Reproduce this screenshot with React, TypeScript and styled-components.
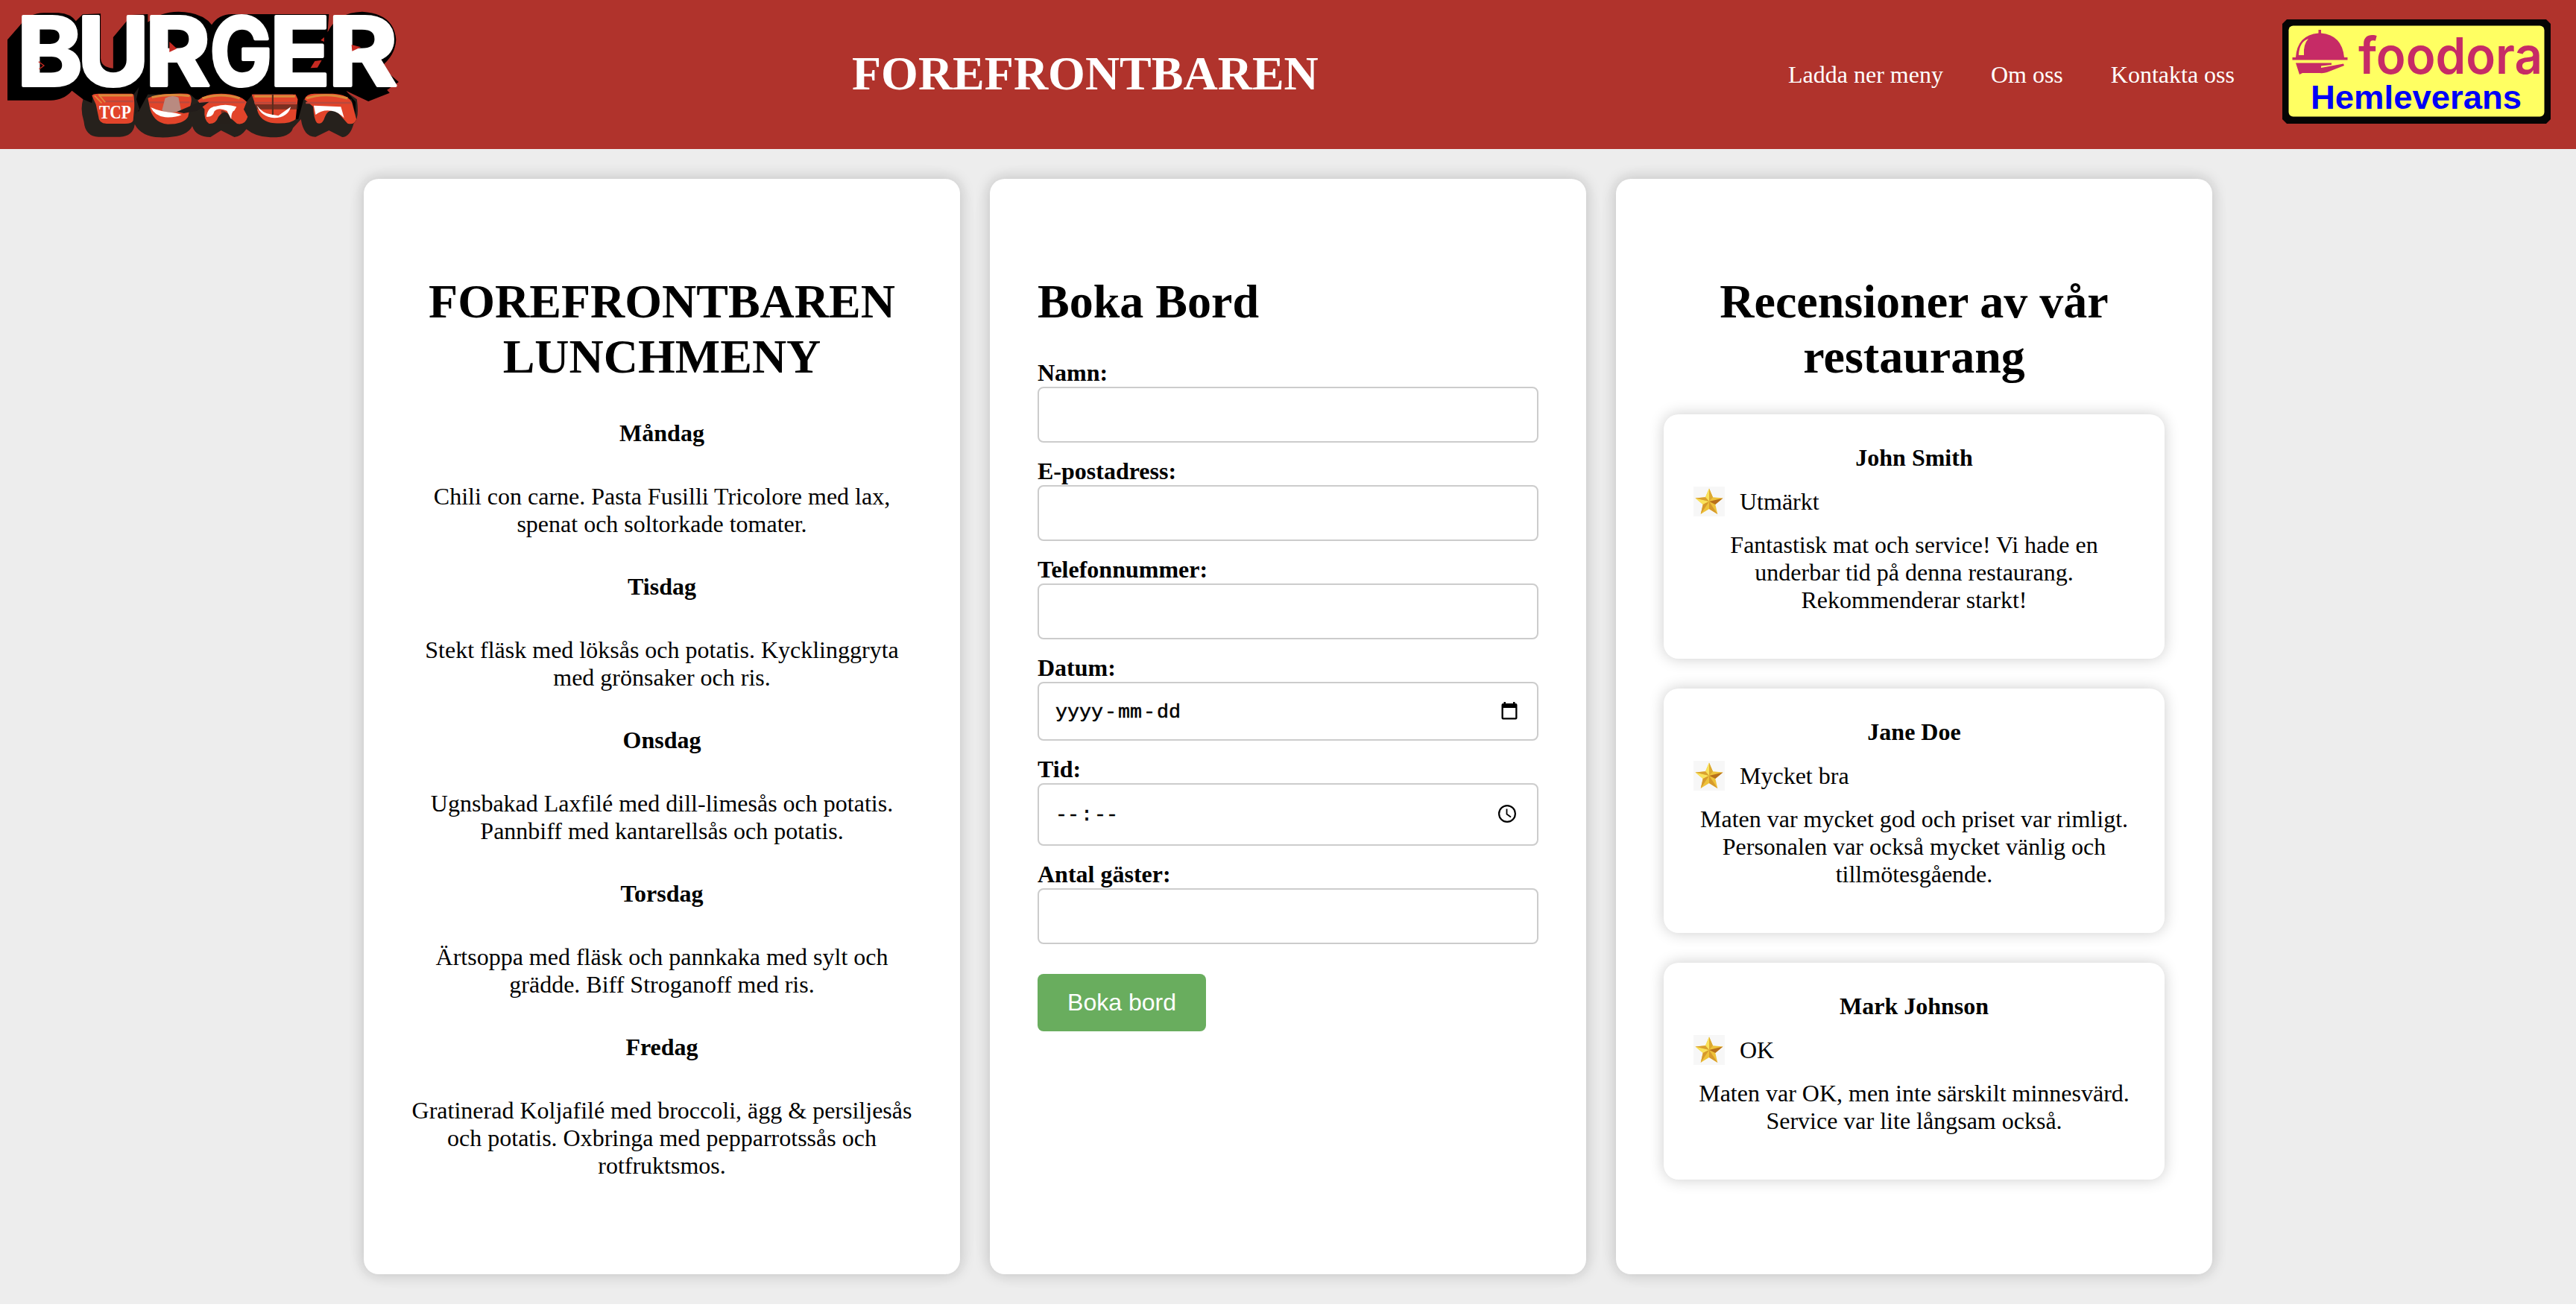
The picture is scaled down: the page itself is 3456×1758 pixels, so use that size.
import React from "react";
import styled, { createGlobalStyle } from "styled-components";

const GlobalStyle = createGlobalStyle`
  *, *::before, *::after { box-sizing: border-box; }
  html, body { margin: 0; background: #fdfdfd; }
  body {
    font-family: "Liberation Serif", "Times New Roman", serif;
    font-size: 32px;
    line-height: 37px;
    color: #000;
  }
  h1, h2, h3, p { margin: 0; }
`;

const Page = styled.div`
  height: 1750px;
  background: #ededed;
`;

const Header = styled.header`
  display: flex;
  align-items: center;
  height: 200px;
  padding-right: 34px;
  background: #b0332c;
  color: #fff;
`;

const Brand = styled.h1`
  margin-left: 582px;
  padding-bottom: 2px;
  font-size: 64px;
  line-height: 74px;
  font-weight: 700;
`;

const Nav = styled.nav`
  display: flex;
  gap: 64px;
  margin-left: auto;
  margin-right: 64px;
`;

const NavLink = styled.a`
  color: #fff;
  text-decoration: none;
  white-space: nowrap;
`;

const Columns = styled.main`
  display: flex;
  justify-content: center;
  gap: 40px;
  padding: 40px 0;
`;

const Column = styled.section<{ $align?: string }>`
  width: 800px;
  height: 1470px;
  padding: 128px 64px 64px;
  border-radius: 20px;
  background: #fff;
  box-shadow: 0 0 20px rgba(0, 0, 0, 0.2), 0 0 60px rgba(0, 0, 0, 0.015);
  text-align: ${(p) => p.$align ?? "center"};
`;

const Heading = styled.h1`
  font-size: 64px;
  line-height: 74px;
  font-weight: 700;
`;

const Day = styled.h3`
  margin-top: 47px;
  font-size: 32px;
  font-weight: 700;
`;

const Dish = styled.p`
  margin-top: 48px;
`;

const Form = styled.div`
  display: flex;
  flex-direction: column;
  align-items: flex-start;
  gap: 20px;
  margin-top: 40px;
`;

const Field = styled.div`
  width: 100%;
`;

const Label = styled.label`
  display: block;
  font-weight: 700;
`;

const Box = styled.div<{ $h: number }>`
  display: flex;
  align-items: center;
  justify-content: space-between;
  height: ${(p) => p.$h}px;
  padding: 0 22px 2px 20px;
  border: 2px solid #ccc;
  border-radius: 8px;
  background: #fff;
  font-family: "Liberation Mono", "Courier New", monospace;
  font-size: 26.667px;
`;

const Segments = styled.span`
  display: flex;
  gap: 2px;
  padding: 5px 0 0 2px;
  -webkit-text-stroke: 0.5px #000;
`;

const Submit = styled.button`
  width: 226px;
  height: 77px;
  margin-top: 20px;
  padding: 0;
  border: 0;
  border-radius: 8px;
  background: #69ad5e;
  color: #fff;
  font-family: "Liberation Sans", Arial, sans-serif;
  font-size: 32px;
  line-height: 37px;
`;

const Reviews = styled.div`
  display: flex;
  flex-direction: column;
  gap: 40px;
  margin-top: 40px;
`;

const ReviewCard = styled.article`
  padding: 40px 40px 60px;
  border-radius: 20px;
  background: #fff;
  box-shadow: 0 0 20px rgba(0, 0, 0, 0.2);
`;

const Reviewer = styled.h3`
  font-size: 32px;
  font-weight: 700;
`;

const Rating = styled.div`
  display: flex;
  align-items: center;
  gap: 20px;
  height: 40px;
  margin: 20px 0;
`;

const RatingText = styled.span`
  padding-top: 1px;
`;

const logoLetters = [
  { char: "B", x: 63, width: 248 },
  { char: "U", x: 290, width: 271 },
  { char: "R", x: 544, width: 246 },
  { char: "G", x: 787, width: 235 },
  { char: "E", x: 1012, width: 229 },
  { char: "R", x: 1231, width: 262 },
];

const BurgerLogo = () => (
  <svg width="561" height="200" viewBox="0 0 1570 600" preserveAspectRatio="none">
    <path
      fill="#26211c"
      d="M312 400Q300 440 315 490Q320 550 370 551H450Q500 548 506 500Q530 550 600 553Q700 556 722 508Q735 552 790 552L830 525L880 552Q905 550 925 520Q960 552 1015 553Q1090 555 1100 515L1130 480Q1140 552 1185 551L1235 525L1285 552Q1315 550 1328 497Q1350 480 1340 400L1300 370H320Z"
    />
    <path
      fill="#000"
      d="M28 160L78 98Q110 52 165 52H220Q265 55 285 85L310 58L378 55V235Q380 272 425 275V150L495 60L555 57V90Q600 48 670 47Q760 50 795 100Q820 58 870 57H1235L1230 130Q1265 50 1360 47Q1480 55 1487 160Q1484 225 1430 268L1497 330L1453 362L1463 374L1383 408L1300 366L1335 410V460L1320 400H1140L1120 480H1100V378H950L925 410L735 400L715 380H555L520 450L500 378H350L345 415L312 400L270 365Q240 403 190 404H28Z"
    />
    <g fill="#e2442a">
      <path d="M345 385Q350 376 375 377H495Q510 380 506 410L500 485Q495 498 470 498H400Q370 495 370 470L360 420Z" />
      <path d="M555 395Q600 374 700 377Q722 378 718 410L706 470Q690 500 630 500Q570 495 560 420Z" />
      <path d="M742 405Q770 377 830 377Q900 378 926 410L915 440L930 470Q920 505 890 498L865 475Q850 430 820 470Q810 500 785 498Q765 485 768 440Z" />
      <path d="M945 380H1110L1118 400L1110 480Q1090 500 1030 496Q975 490 965 440Z" />
      <path d="M1143 400Q1150 377 1180 377H1250Q1310 380 1322 415L1338 480Q1330 505 1305 497L1270 455Q1235 430 1220 470Q1210 505 1190 495Q1178 480 1176 430Z" />
    </g>
    <g fill="none" stroke="#d98a3a" strokeWidth="9">
      <path d="M372 384H498M570 392Q630 376 712 386M760 396Q830 372 900 396M955 388H1108M1150 396Q1220 370 1305 396" />
    </g>
    <g fill="none" stroke="#b9483c" strokeWidth="7">
      <path d="M392 408H500M560 412H712M752 412H920M955 414H1112M1148 414H1318" />
    </g>
    <path fill="#26211c" d="M830 445Q850 440 858 478L870 500L815 500Q835 470 830 445ZM1100 420H1120V440H960V420Z" opacity=".55" />
    <path fill="#b98a80" d="M620 395Q645 380 670 392L680 445Q640 462 608 445Z" />
    <g fill="#fff">
      <path d="M566 432Q600 450 660 455L682 462Q660 474 620 472Q580 466 566 432Z" />
      <path d="M775 470Q780 430 810 428Q850 415 888 430L880 445Q868 450 868 480L852 446Q820 430 805 448Q798 474 775 470Z" />
      <path d="M965 425Q985 455 1015 460L1045 466L1092 430Q1080 474 1030 475Q980 470 965 425Z" />
      <path d="M1178 425L1280 430L1292 475Q1270 450 1245 446Q1210 440 1185 462Z" />
    </g>
    <path fill="#221c1a" d="M664 450L740 415L785 410L740 446L690 456ZM502 380L522 350L512 400L524 440L508 460Z" />
    <path stroke="#5c2c1c" strokeWidth="6" d="M1024 380V462" />
    <path fill="none" stroke="#e08a3c" strokeWidth="5" d="M355 385L382 415M370 380L395 412" />
    <text x="372" y="478" fill="#fff" fontFamily="Liberation Serif, serif" fontWeight="700" fontSize="76" textLength="120" lengthAdjust="spacingAndGlyphs">
      TCP
    </text>
    <g fill="#fff" stroke="#fff" strokeWidth="12" strokeLinejoin="round" fontFamily="Inter, sans-serif" fontWeight="700" fontSize="382">
      {logoLetters.map((l) => (
        <text key={l.x} x={l.x} y="344" textLength={l.width} lengthAdjust="spacingAndGlyphs">
          {l.char}
        </text>
      ))}
    </g>
    <path fill="#c62a22" d="M636 168L664 196L636 210ZM1320 180L1355 190L1322 206ZM1166 274L1182 246L1208 242L1192 272ZM1204 162L1217 150V168Z" />
    <path fill="none" stroke="#c62a22" strokeWidth="4" d="M145 248L165 264L147 278" />
  </svg>
);

const BadgeLink = styled.a`
  display: flex;
  padding-bottom: 8px;
`;

const FoodoraBadge = () => (
  <BadgeLink>
    <svg width="360" height="140" viewBox="0 0 360 140">
      <path fill="#050505" d="M6 0H354L360 6V134L354 140H6L0 134V6Z" />
      <rect x="8.5" y="8.5" width="343" height="122" rx="6" fill="#ffff62" />
      <g fill="#c62b66">
        <path d="M48.500 14H52V18.500Q80 21 83 51H87.500V54.500H13.500V51H18Q20 21 48.500 18.500Z" />
        <path d="M18 58.500H66V61L52 62.500V65L82 59.500L83 62L60 71Q56 72.500 50 72H27L23 74Z" />
      </g>
      <path fill="#ffff62" d="M22 47Q23 30 35 26Q28 33 29 48H22Z" />
      <text x="102" y="73" fill="#c62b66" fontFamily="Inter, sans-serif" fontWeight="600" fontSize="68" textLength="247" lengthAdjust="spacingAndGlyphs">
        foodora
      </text>
      <text x="38" y="120" fill="#0000f5" fontFamily="Liberation Sans, Arial, sans-serif" fontWeight="700" fontSize="44" textLength="283" lengthAdjust="spacingAndGlyphs">
        Hemleverans
      </text>
    </svg>
  </BadgeLink>
);

const Star = () => (
  <svg width="42" height="40" viewBox="0 0 42 40">
    <rect width="42" height="40" fill="#f7f7f7" />
    <path fill="#eec23a" d="M21 2.500L26 14.300L39.500 15.500L29.300 24L32.300 37L21 30L9.700 37L12.700 24L2.500 15.500L16 14.300Z" />
    <path fill="#f9e25c" d="M21 2.500L16 14.300L21 20ZM2.500 15.500L12.700 24L21 20Z" />
    <path fill="#d9a030" d="M2.500 15.500L16 14.300L21 20Z" />
    <path fill="#b8701c" d="M39.500 15.500L21 20L29.300 24Z" />
    <path fill="#d79a2c" d="M32.300 37L21 20V30ZM9.700 37L21 20L12.700 24Z" />
    <path fill="#dca932" d="M21 2.500V20L26 14.300Z" />
  </svg>
);

const CalendarIcon = () => (
  <svg width="22" height="24" viewBox="0 0 22 24">
    <path fill="#000" fillRule="evenodd" d="M3.500 0H6V2H16V0H18.500V2H19.500Q21.500 2 21.500 4V21.500Q21.500 23.500 19.500 23.500H2.500Q.5 23.500 .5 21.500V4Q.5 2 2.500 2H3.500ZM2.800 8V21.300H19.200V8Z" />
  </svg>
);

const ClockIcon = () => (
  <svg width="26" height="26" viewBox="0 0 26 26" fill="none" stroke="#000" strokeWidth="2.200">
    <circle cx="13" cy="13" r="10.900" />
    <path strokeWidth="1.800" d="M12.500 6.500V13.600L18 17.500" />
  </svg>
);

const IconSlot = styled.span<{ $right: number }>`
  display: flex;
  margin-right: ${(p) => p.$right}px;
`;

const menu = [
  { day: "Måndag", dish: "Chili con carne. Pasta Fusilli Tricolore med lax, spenat och soltorkade tomater." },
  { day: "Tisdag", dish: "Stekt fläsk med löksås och potatis. Kycklinggryta med grönsaker och ris." },
  { day: "Onsdag", dish: "Ugnsbakad Laxfilé med dill-limesås och potatis. Pannbiff med kantarellsås och potatis." },
  { day: "Torsdag", dish: "Ärtsoppa med fläsk och pannkaka med sylt och grädde. Biff Stroganoff med ris." },
  { day: "Fredag", dish: "Gratinerad Koljafilé med broccoli, ägg & persiljesås och potatis. Oxbringa med pepparrotssås och rotfruktsmos." },
];

const reviews = [
  { name: "John Smith", rating: "Utmärkt", text: "Fantastisk mat och service! Vi hade en underbar tid på denna restaurang. Rekommenderar starkt!" },
  { name: "Jane Doe", rating: "Mycket bra", text: "Maten var mycket god och priset var rimligt. Personalen var också mycket vänlig och tillmötesgående." },
  { name: "Mark Johnson", rating: "OK", text: "Maten var OK, men inte särskilt minnesvärd. Service var lite långsam också." },
];

const dateParts = ["yyyy", "-", "mm", "-", "dd"];
const timeParts = ["--", ":", "--"];

export default function App() {
  return (
    <>
      <GlobalStyle />
      <Page>
        <Header>
          <BurgerLogo />
          <Brand>FOREFRONTBAREN</Brand>
          <Nav>
            <NavLink>Ladda ner meny</NavLink>
            <NavLink>Om oss</NavLink>
            <NavLink>Kontakta oss</NavLink>
          </Nav>
          <FoodoraBadge />
        </Header>
        <Columns>
          <Column>
            <Heading>FOREFRONTBAREN LUNCHMENY</Heading>
            {menu.map((m) => (
              <React.Fragment key={m.day}>
                <Day>{m.day}</Day>
                <Dish>{m.dish}</Dish>
              </React.Fragment>
            ))}
          </Column>
          <Column $align="left">
            <Heading>Boka Bord</Heading>
            <Form>
              <Field>
                <Label>Namn:</Label>
                <Box $h={75} />
              </Field>
              <Field>
                <Label>E-postadress:</Label>
                <Box $h={75} />
              </Field>
              <Field>
                <Label>Telefonnummer:</Label>
                <Box $h={75} />
              </Field>
              <Field>
                <Label>Datum:</Label>
                <Box $h={79}>
                  <Segments>
                    {dateParts.map((part, i) => (
                      <span key={i}>{part}</span>
                    ))}
                  </Segments>
                  <IconSlot $right={4}>
                    <CalendarIcon />
                  </IconSlot>
                </Box>
              </Field>
              <Field>
                <Label>Tid:</Label>
                <Box $h={84}>
                  <Segments>
                    {timeParts.map((part, i) => (
                      <span key={i}>{part}</span>
                    ))}
                  </Segments>
                  <IconSlot $right={5}>
                    <ClockIcon />
                  </IconSlot>
                </Box>
              </Field>
              <Field>
                <Label>Antal gäster:</Label>
                <Box $h={75} />
              </Field>
              <Submit>Boka bord</Submit>
            </Form>
          </Column>
          <Column>
            <Heading>Recensioner av vår restaurang</Heading>
            <Reviews>
              {reviews.map((r) => (
                <ReviewCard key={r.name}>
                  <Reviewer>{r.name}</Reviewer>
                  <Rating>
                    <Star />
                    <RatingText>{r.rating}</RatingText>
                  </Rating>
                  <p>{r.text}</p>
                </ReviewCard>
              ))}
            </Reviews>
          </Column>
        </Columns>
      </Page>
    </>
  );
}
